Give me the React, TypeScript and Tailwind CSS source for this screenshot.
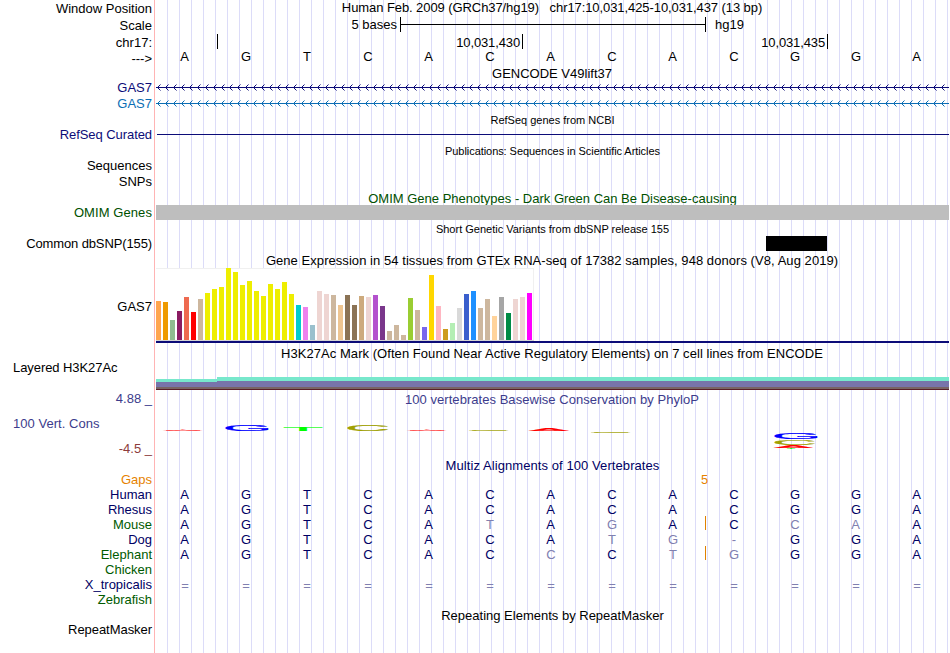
import clsx from "clsx";

const labels = [
  { text: "Window Position", style: "mt-px" },
  { text: "Scale", style: "mt-px" },
  { text: "chr17:", style: "mt-px" },
  { text: "--->", style: "" },
  { text: "GAS7", style: "mt-[13px] text-[#0c0c78]" },
  { text: "GAS7", style: "text-[#0c6eb4]" },
  { text: "RefSeq Curated", style: "mt-[15px] tracking-[-0.07px] text-[#0c0c78]" },
  { text: "Sequences", style: "mt-[15px]" },
  { text: "SNPs", style: "" },
  { text: "OMIM Genes", style: "mt-[15px] tracking-[0.08px] text-[#005000]" },
  { text: "Common dbSNP(155)", style: "mt-[15px] tracking-[-0.12px]" },
  { text: "GAS7", style: "mt-[47px]" },
  { text: "Layered H3K27Ac", style: "mt-[45px] self-start pl-[13px] tracking-[-0.07px]" },
  { text: "4.88 _", style: "mt-[15px] text-[#3c3c8c]" },
  { text: "100 Vert. Cons", style: "mt-[9px] self-start pl-[13px] tracking-[0.04px] text-[#3c3c8c]" },
  { text: "-4.5 _", style: "mt-[9px] text-[#8c3c3c]" },
];

const species = [
  { name: "Human", bases: "AGTCACACACGGA", color: "text-[#000064]" },
  { name: "Rhesus", bases: "AGTCACACACGGA", color: "text-[#000064]" },
  { name: "Mouse", bases: "AGTCAtAgACcaA", color: "text-[#005a00]", insert: true },
  { name: "Dog", bases: "AGTCACAtg-GGA", color: "text-[#000064]" },
  { name: "Elephant", bases: "AGTCACcCtgGGA", color: "text-[#005a00]", insert: true },
  { name: "Chicken", bases: "", color: "text-[#005a00]" },
  { name: "X_tropicalis", bases: "=============", color: "text-[#000064]" },
  { name: "Zebrafish", bases: "", color: "text-[#005a00]" },
];

// [color, height] of each tissue bar
const tissues: [string, number][] = [
  ["#ffa54f", 39], ["#ee9a00", 38], ["#8fbc8f", 20], ["#8b1c62", 29], ["#ee6a50", 43], ["#ff0000", 28],
  ["#cdb79e", 41], ["#eeee00", 47], ["#eeee00", 51], ["#eeee00", 53], ["#eeee00", 72], ["#eeee00", 68],
  ["#eeee00", 55], ["#eeee00", 59], ["#eeee00", 49], ["#eeee00", 44], ["#eeee00", 56], ["#eeee00", 51],
  ["#eeee00", 58], ["#eeee00", 46], ["#00cdcd", 35], ["#ee82ee", 33], ["#9ac0cd", 15], ["#eed5d2", 49],
  ["#eed5d2", 46], ["#cdb79e", 45], ["#eec591", 35], ["#8b7355", 45], ["#8b7355", 35], ["#cdaa7d", 44],
  ["#eed5d2", 43], ["#b452cd", 45], ["#7a378b", 34], ["#cdb79e", 9], ["#cdb79e", 15], ["#cdb79e", 5],
  ["#9acd32", 42], ["#cdb79e", 30], ["#7a67ee", 13], ["#ffd700", 65], ["#ffb6c1", 34], ["#cd9b1d", 11],
  ["#b4eeb4", 17], ["#d9d9d9", 32], ["#3a5fcd", 46], ["#1e90ff", 49], ["#cdb79e", 32], ["#cdb79e", 41],
  ["#ffd39b", 24], ["#a6a6a6", 43], ["#008b45", 27], ["#eed5d2", 41], ["#eed5d2", 43], ["#ff00ff", 47],
];

// sequence logo letters: left, baseline and the box they are stretched to
const logo = [
  { base: "A", x: 7, y: 23, w: 40, h: 1, color: "#ff0000" },
  { base: "G", x: 70, y: 22.5, w: 42, h: 6.2, color: "#0000ff" },
  { base: "T", x: 128, y: 23, w: 38, h: 4, color: "#00ff00" },
  { base: "C", x: 192, y: 22.5, w: 40, h: 6.2, color: "#a0a000" },
  { base: "A", x: 251, y: 23, w: 40, h: 1, color: "#ff0000" },
  { base: "C", x: 313, y: 23, w: 40, h: 1, color: "#a0a000" },
  { base: "A", x: 373, y: 23, w: 40, h: 2.6, color: "#ff0000" },
  { base: "C", x: 435, y: 25, w: 40, h: 1, color: "#a0a000" },
  { base: "G", x: 619, y: 30.5, w: 42, h: 6.2, color: "#0000ff" },
  { base: "C", x: 619, y: 36.5, w: 40, h: 5.2, color: "#a0a000" },
  { base: "A", x: 618, y: 39.6, w: 39, h: 2.4, color: "#ff0000" },
  { base: "T", x: 631, y: 41, w: 8, h: 1.5, color: "#00ff00" },
];

// ink extents of the letters at a font size of 100
const ink: Record<string, { left: number; width: number; height: number }> = {
  A: { left: 0, width: 67, height: 69 },
  C: { left: 5, width: 64, height: 71 },
  G: { left: 5, width: 66, height: 71 },
  T: { left: 2, width: 57, height: 69 },
};

function Title({ children, className }: { children: string; className?: string }) {
  return <h2 className={clsx("h-4 whitespace-pre text-center leading-4", className)}>{children}</h2>;
}

function Intron({ id, className }: { id: string; className: string }) {
  return (
    <svg width="793" height="7" shapeRendering="crispEdges" className={clsx("block", className)}>
      <pattern id={id} width="8" height="7" patternUnits="userSpaceOnUse">
        <path
          fill="currentColor"
          d="M0 3h8v1h-8zM1 3h1v1h-1zM2 2h1v1h-1zM2 4h1v1h-1zM3 1h1v1h-1zM3 5h1v1h-1z"
        />
        <path fill="currentColor" opacity="0.5" d="M4 0h1v1h-1zM4 6h1v1h-1z" />
      </pattern>
      <rect width="793" height="7" fill={`url(#${id})`} />
    </svg>
  );
}

function Bases({ bases, insert, className }: { bases: string; insert?: boolean; className?: string }) {
  return (
    <div className={clsx("flex leading-4", className)}>
      {bases.split("").map((base, i) => (
        <span
          key={i}
          className={clsx(
            "relative w-[61px] text-center",
            base === "A" || base === "a" ? "pr-1" : "pr-[3px]",
            /[a-z=-]/.test(base) && "text-[#8080b0]",
            base === "=" && "pt-px",
          )}
        >
          {insert && i === 9 && <i className="absolute left-0 top-[-1px] h-3.5 w-px bg-[#e08200]" />}
          {base.toUpperCase()}
        </span>
      ))}
    </div>
  );
}

function Conservation() {
  return (
    <svg width="793" height="50" className="block font-['Liberation_Sans',sans-serif]">
      {logo.map(({ base, x, y, w, h, color }, i) => {
        const box = ink[base];
        const sx = w / box.width;
        return (
          <g key={i} fill={color} stroke={color}>
            <text
              fontSize="100"
              strokeWidth="2"
              transform={`translate(${x - box.left * sx} ${y}) scale(${sx} ${h / box.height})`}
            >
              {base}
            </text>
            {h === 1 && <rect x={x + 3} y={y - 1} width={w - 6} height="1" stroke="none" opacity="0.4" />}
          </g>
        );
      })}
    </svg>
  );
}

export default function App() {
  return (
    <main className="flex h-[653px] w-[950px] overflow-hidden bg-white font-['Liberation_Sans',Arial,sans-serif] text-[13px] text-black">
      <aside className="flex w-[155px] shrink-0 flex-col items-end border-r border-[#ffb4b4] pr-0.5">
        {labels.map((label, i) => (
          <div key={i} className={clsx("h-4 shrink-0 whitespace-pre leading-4", label.style)}>
            {label.text}
          </div>
        ))}
        <div className="mt-[15px] h-[15px] leading-4 text-[#e68200]">Gaps</div>
        {species.map((s) => (
          <div key={s.name} className={clsx("h-[15px] leading-4", s.color)}>
            {s.name}
          </div>
        ))}
        <div className="mt-[15px] h-4 tracking-[-0.05px] leading-4">RepeatMasker</div>
      </aside>

      <section className="ml-px w-[793px] bg-[repeating-linear-gradient(to_right,transparent_0_11px,#dcdcf8_11px_12px)]">
        <Title className="pr-px tracking-[-0.08px]">
          {"Human Feb. 2009 (GRCh37/hg19)   chr17:10,031,425-10,031,437 (13 bp)"}
        </Title>
        <div className="mt-px flex h-[15px] leading-4">
          <span className="w-[244px] pr-[3px] text-right">5 bases</span>
          <span className="flex w-[306px] items-center border-x border-black">
            <i className="h-px w-full bg-black" />
          </span>
          <span className="pl-[9px]">hg19</span>
        </div>
        <div className="mt-0.5 flex h-[15px] text-right tracking-[-0.13px] leading-[17px]">
          <span className="w-[62px] border-r border-black" />
          <span className="w-[305px] border-r border-black pr-0.5">10,031,430</span>
          <span className="w-[305px] border-r border-black pr-0.5">10,031,435</span>
        </div>
        <Bases bases="AGTCACACACGGA" className="h-4" />

        <Title className="mt-px pr-px">GENCODE V49lift37</Title>
        <Intron id="gas7-coding" className="mt-0.5 text-[#0c0c78]" />
        <Intron id="gas7-other" className="mt-[9px] text-[#0c6eb4]" />

        <Title className="mt-[5px] text-[11px]">RefSeq genes from NCBI</Title>
        <div className="ml-px mt-1.5 h-px bg-[#0c0c78]" />

        <Title className="mt-2 text-[11px] tracking-[-0.06px]">Publications: Sequences in Scientific Articles</Title>

        <h2 className="mt-8 h-3.5 overflow-hidden text-center leading-4 text-[#005000]">
          OMIM Gene Phenotypes - Dark Green Can Be Disease-causing
        </h2>
        <div className="h-[15px] bg-[#bebebe]" />

        <h2 className="mt-px h-[15px] text-center text-[11px] leading-4">
          Short Genetic Variants from dbSNP release 155
        </h2>
        <div className="ml-[610px] h-[15px] w-[61px] bg-black" />

        <h2 className="mt-0.5 h-[15px] pr-px text-center tracking-[0.055px] leading-4">
          Gene Expression in 54 tissues from GTEx RNA-seq of 17382 samples, 948 donors (V8, Aug 2019)
        </h2>
        <div className="flex h-[73px] w-[378px] items-end gap-0.5 border-b border-b-[#d4d4d4] bg-white shadow-[inset_0_1px_#f0f0f0,inset_-1px_0_#f0f0f0]">
          {tissues.map(([color, height], i) => (
            <i key={i} className="w-[5px] shrink-0" style={{ height, backgroundColor: color }} />
          ))}
        </div>
        <div className="h-0.5 bg-[#0c0c78]" />

        <Title className="mt-[3px] pr-px tracking-[0.05px]">
          H3K27Ac Mark (Often Found Near Active Regulatory Elements) on 7 cell lines from ENCODE
        </Title>
        <div className="mt-[15px] flex h-2.5 items-end">
          <div className="h-2 w-[61px] border-t-[3px] border-[#78e8cc] bg-[#7874aa]" />
          <div className="h-2.5 flex-1 border-t-4 border-[#78e8cc] bg-[#7874aa]" />
        </div>
        <div className="h-[3px] border-b border-[#5a1e28] bg-[#786464]" />

        <Title className="mt-0.5 pr-px tracking-[0.04px] text-[#3c3c8c]">
          100 vertebrates Basewise Conservation by PhyloP
        </Title>
        <Conservation />

        <h2 className="h-3.5 text-center tracking-[0.08px] leading-4 text-[#000064]">
          Multiz Alignments of 100 Vertebrates
        </h2>
        <div className="h-[15px] pl-[545px] leading-4 text-[#e68200]">5</div>
        {species.map((s) => (
          <Bases key={s.name} bases={s.bases} insert={s.insert} className="h-[15px] text-[#000064]" />
        ))}

        <Title className="mt-px">Repeating Elements by RepeatMasker</Title>
      </section>
    </main>
  );
}
